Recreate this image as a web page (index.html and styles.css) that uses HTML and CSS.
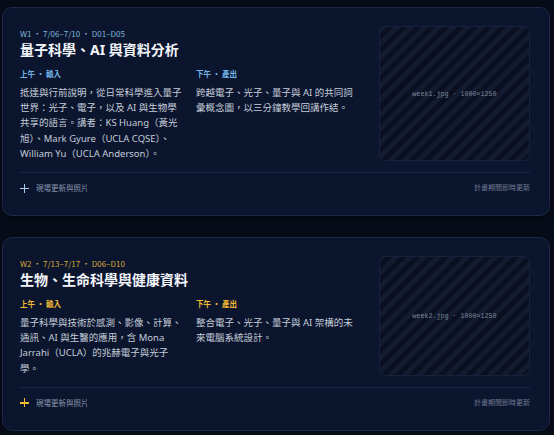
FILE: index.html
```html
<!DOCTYPE html>
<html lang="zh-Hant">
<head>
    <meta charset="UTF-8">
    <meta name="viewport" content="width=device-width, initial-scale=1.0">
    <title>每週課程</title>
    <link rel="stylesheet" href="styles.css">
</head>
<body>
    <div class="weeks">
        <!-- Week 1 -->
        <section class="week-card">
            <div class="week-main">
                <div class="week-text">
                    <div class="week-meta">W1 · 7/06–7/10 · D01–D05</div>
                    <h2 class="week-title">量子科學、AI 與資料分析</h2>
                    <div class="sessions">
                        <div class="session">
                            <div class="session-label">上午 · 輸入</div>
                            <p>抵達與行前說明，從日常科學進入量子世界：光子、電子，以及 AI 與生物學共享的語言。講者：KS Huang（黃光旭）、Mark Gyure（UCLA CQSE）、William Yu（UCLA Anderson）。</p>
                        </div>
                        <div class="session">
                            <div class="session-label">下午 · 產出</div>
                            <p>跨越電子、光子、量子與 AI 的共同詞彙概念圖，以三分鐘教學回講作結。</p>
                        </div>
                    </div>
                </div>
                <div class="photo-slot"><span>week1.jpg · 1000×1250</span></div>
            </div>
            <div class="week-foot">
                <span class="add-update"><span class="plus"></span>現場更新與照片</span>
                <span class="foot-note">計畫期間即時更新</span>
            </div>
        </section>

        <!-- Week 2 -->
        <section class="week-card gold">
            <div class="week-main">
                <div class="week-text">
                    <div class="week-meta">W2 · 7/13–7/17 · D06–D10</div>
                    <h2 class="week-title">生物、生命科學與健康資料</h2>
                    <div class="sessions">
                        <div class="session">
                            <div class="session-label">上午 · 輸入</div>
                            <p>量子科學與技術於感測、影像、計算、通訊、AI 與生醫的應用，含 Mona Jarrahi（UCLA）的兆赫電子與光子學。</p>
                        </div>
                        <div class="session">
                            <div class="session-label">下午 · 產出</div>
                            <p>整合電子、光子、量子與 AI 架構的未來電腦系統設計。</p>
                        </div>
                    </div>
                </div>
                <div class="photo-slot"><span>week2.jpg · 1000×1250</span></div>
            </div>
            <div class="week-foot">
                <span class="add-update"><span class="plus"></span>現場更新與照片</span>
                <span class="foot-note">計畫期間即時更新</span>
            </div>
        </section>
    </div>
</body>
</html>
```

FILE: styles.css
```css
body {
    margin: 0;
    background: #070c19;
    font-family: "Noto Sans", "Noto Sans CJK TC", sans-serif;
    color: #c5cdd9;
}

.weeks {
    display: flex;
    flex-direction: column;
    gap: 21px;
    padding: 7px 4px 0 2px;
}

.week-card {
    background: #0b152e;
    border: 1px solid #1b2947;
    border-radius: 10px;
    padding: 18px 19px 21px 17px;
    box-shadow: 0 2px 8px rgba(0, 0, 0, 0.45);
}

.week-main {
    display: grid;
    grid-template-columns: 1fr 151px;
    gap: 17px;
}

/* small caps lines keep the CJK font so the middle dot stays wide */
.week-meta,
.session-label {
    font-family: "Noto Sans CJK TC", sans-serif;
}

.week-meta {
    margin-top: 2px;
    font-size: 8px;
    line-height: 12px;
    color: #82b6de;
}

.week-title {
    margin: 0;
    font-size: 14px;
    line-height: 20px;
    font-weight: 700;
    color: #f3f6fb;
}

.sessions {
    display: grid;
    grid-template-columns: 164px 164px;
    gap: 12px;
    margin-top: 8px;
}

.session-label {
    font-size: 7.5px;
    line-height: 12px;
    font-weight: 700;
    color: #74b4e4;
}

.session p {
    margin: 5px 0 0;
    font-size: 9.5px;
    line-height: 15.2px;
}

/* image placeholder with diagonal hatching */
.photo-slot {
    display: flex;
    align-items: center;
    justify-content: center;
    border: 1px solid #16213b;
    border-radius: 6px;
    background: repeating-linear-gradient(-45deg, #0a1022 0 5px, #131b31 5px 10px);
    font-family: "Liberation Mono", monospace;
    font-size: 6.7px;
    color: #7d869c;
}

.week-foot {
    display: flex;
    justify-content: space-between;
    align-items: center;
    margin-top: 11px;
    padding-top: 9px;
    border-top: 1px solid #18264a;
    line-height: 12px;
}

.add-update {
    display: flex;
    align-items: center;
    gap: 7px;
    font-size: 7.5px;
    color: #8c97ad;
}

.plus {
    position: relative;
    width: 9px;
    height: 9px;
    --mark: #a8cfee;
}

.plus::before,
.plus::after {
    content: "";
    position: absolute;
    background: var(--mark);
}

.plus::before {
    left: 0;
    top: 4px;
    width: 9px;
    height: 1.5px;
}

.plus::after {
    left: 3.75px;
    top: 0;
    width: 1.5px;
    height: 9px;
}

.foot-note {
    font-size: 7px;
    color: #6f7b93;
}

/* amber accent for week 2 */
.gold .week-meta {
    color: #d9a83a;
}

.gold .session-label {
    color: #f2b935;
}

.gold .plus {
    --mark: #f2b935;
}
```
